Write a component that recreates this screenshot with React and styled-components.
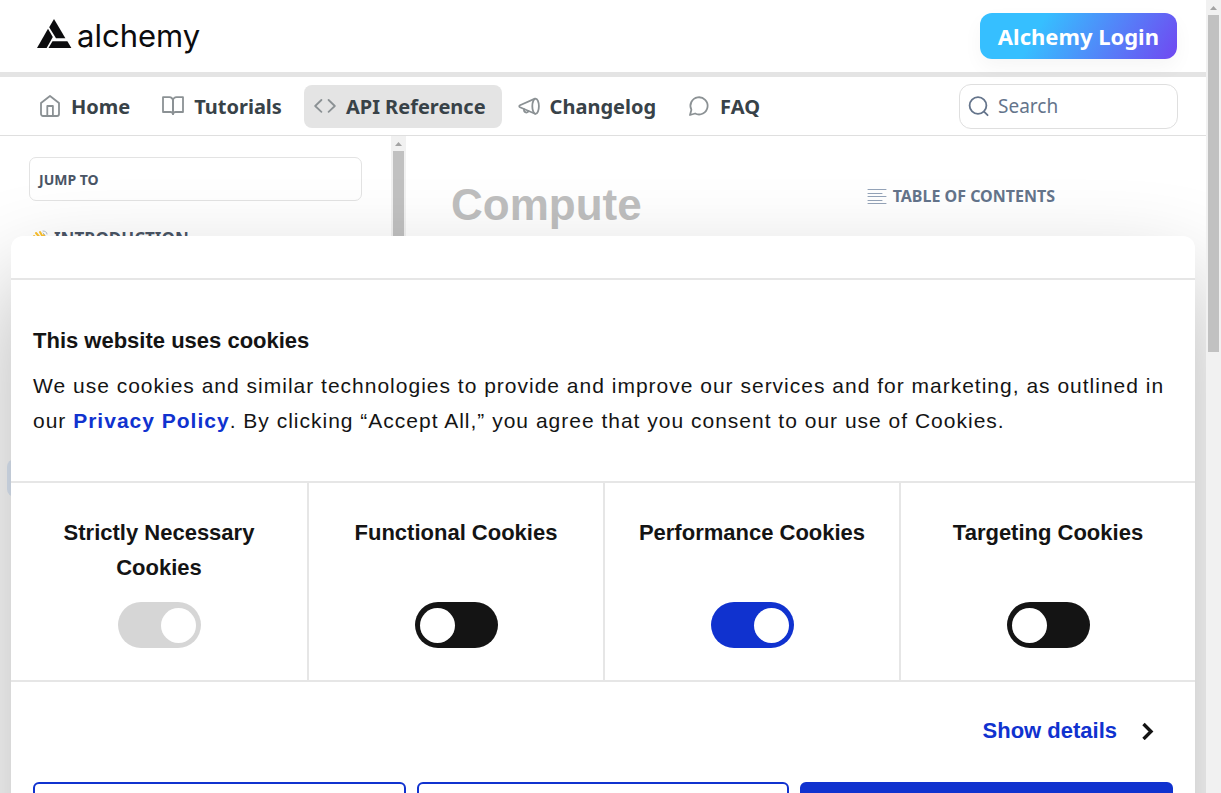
import React from "react";
import styled, { createGlobalStyle } from "styled-components";

const UI_FONT = '"Noto Sans", "Open Sans", sans-serif';
const TEXT_FONT = '"Liberation Sans", Arial, sans-serif';
const LINE = "#e3e3e3";
const BLUE = "#1032cf";
const INK = "#141414";

const GlobalStyle = createGlobalStyle`
  *, *::before, *::after { box-sizing: border-box; }
  html, body { margin: 0; overflow: hidden; background: #fff; }
  button, input { font: inherit; color: inherit; margin: 0; }
`;

const Shell = styled.div`
  display: flex;
  height: 100vh;
  font-family: ${UI_FONT};
`;

const Page = styled.div`
  position: relative;
  flex: 1;
  min-width: 0;
  overflow: hidden;
  display: flex;
  flex-direction: column;
`;

const ScrollTrack = styled.div`
  flex: none;
  width: 15px;
  padding: 0 2px;
  background: #f1f1f1;
  display: flex;
  flex-direction: column;
`;

const ScrollArrow = styled.svg`
  display: block;
  width: 11px;
  height: 15px;
  fill: #a3a3a3;
`;

const ScrollThumb = styled.div`
  height: ${(p) => p.$size};
  background: #c1c1c1;
`;

const TopBar = styled.header`
  display: flex;
  align-items: center;
  justify-content: space-between;
  height: 77px;
  padding: 0 29px 0 37px;
  border-bottom: 5px solid #e4e4e4;
`;

const Logo = styled.a`
  display: flex;
  align-items: center;
  gap: 5px;
  color: #0c0c0e;
  text-decoration: none;
  font: 400 31px/44px Inter, sans-serif;

  svg { display: block; }
`;

const LoginButton = styled.button`
  height: 46px;
  padding: 0 18px;
  border: 0;
  border-radius: 12px;
  background: linear-gradient(120deg, #36bfff 30%, #6e4df2 97%);
  box-shadow: 0 8px 20px rgba(0, 0, 0, 0.04);
  color: #fff;
  font-size: 22px;
  font-weight: 700;
`;

const NavBar = styled.nav`
  display: flex;
  align-items: center;
  justify-content: space-between;
  height: 59px;
  padding: 0 28px 0 29px;
  border-bottom: 1px solid #dfdfdf;
`;

const NavLinks = styled.div`
  display: flex;
  gap: 6px;
`;

const NavLink = styled.a`
  display: flex;
  align-items: center;
  gap: 10px;
  height: 43px;
  padding: 0 16px 0 10px;
  border-radius: 8px;
  background: ${(p) => (p.$active ? "#e4e4e4" : "transparent")};
  color: #384248;
  font-size: 20px;
  font-weight: 700;
  text-decoration: none;

  svg { color: #8b9194; }
`;

const StrokeIcon = styled.svg`
  flex: none;
  display: block;
  fill: none;
  stroke: currentColor;
  stroke-width: 1.8;
  stroke-linecap: round;
  stroke-linejoin: round;
`;

const SearchBox = styled.label`
  display: flex;
  align-items: center;
  gap: 8px;
  width: 219px;
  height: 45px;
  padding: 0 8px;
  border: 1px solid #dfdfdf;
  border-radius: 12px;
  color: #64748b;

  input {
    flex: 1;
    min-width: 0;
    padding: 0;
    border: 0;
    outline: 0;
    background: none;
    font-size: 19px;
  }
  input::placeholder { color: #64748b; opacity: 1; }
`;

const Columns = styled.div`
  flex: 1;
  min-height: 0;
  display: flex;
`;

const Sidebar = styled.aside`
  flex: none;
  width: 391px;
  padding: 21px 29px 0;
  color: #4a5565;
`;

const JumpTo = styled.button`
  display: block;
  width: 100%;
  height: 44px;
  padding: 0 9px;
  border: 1px solid ${LINE};
  border-radius: 7px;
  background: transparent;
  text-align: left;
  font-size: 14px;
  font-weight: 700;
`;

const SectionTitle = styled.h2`
  display: flex;
  align-items: center;
  gap: 4px;
  margin: 26px 0 0 3px;
  font-size: 17px;
  line-height: 24px;
  font-weight: 700;
`;

const CurrentRow = styled.div`
  height: 38px;
  margin: 208px -22px 0;
  border-radius: 8px;
  background: #e2edfb;
`;

const Article = styled.main`
  flex: 1;
  min-width: 0;
  display: flex;
  justify-content: space-between;
  align-items: flex-start;
  padding: 43px 151px 0 45px;
`;

const Title = styled.h1`
  margin: 0;
  color: #bfbfbf;
  font: 700 44px/52px ${TEXT_FONT};
`;

const Contents = styled.h2`
  display: flex;
  align-items: center;
  gap: 6px;
  margin: 5px 0 0;
  color: #64748b;
  font-size: 16px;
  line-height: 24px;
  font-weight: 700;

  svg { stroke: #94a3b8; stroke-width: 1; }
`;

const Dialog = styled.section`
  position: absolute;
  top: 236px;
  left: 11px;
  right: 11px;
  border-radius: 12px;
  background: #fff;
  box-shadow: 0 46px 98px rgba(0, 0, 0, 0.3);
  color: ${INK};
  font: 22px/35px ${TEXT_FONT};
`;

const DialogHead = styled.div`
  height: 44px;
  border-bottom: 2px solid #e6e6e6;
`;

const Notice = styled.div`
  height: 203px;
  padding: 43px 22px 0;
  border-bottom: 2px solid #e6e6e6;

  h2 {
    margin: 0 0 10px;
    font-size: 22px;
    font-weight: 700;
  }
  p {
    margin: 0;
    font-size: 21px;
    letter-spacing: 1px;
  }
  a {
    color: ${BLUE};
    font-weight: 700;
    text-decoration: none;
  }
`;

const Choices = styled.div`
  display: grid;
  grid-template-columns: repeat(4, 1fr);
  border-bottom: 2px solid #e6e6e6;
`;

const Choice = styled.label`
  display: flex;
  flex-direction: column;
  align-items: center;
  justify-content: space-between;
  height: 197px;
  padding: 32px 20px 32px;
  text-align: center;
  font-weight: 700;

  & + & { border-left: 2px solid #e6e6e6; }
`;

const Toggle = styled.input`
  appearance: none;
  display: flex;
  align-items: center;
  justify-content: flex-start;
  width: 83px;
  height: 46px;
  padding: 0 5px;
  border-radius: 23px;
  background: ${INK};

  &::before {
    content: "";
    width: 35px;
    height: 35px;
    border-radius: 50%;
    background: #fff;
  }
  &:checked { justify-content: flex-end; background: ${BLUE}; }
  &:disabled { background: #d6d6d6; }
`;

const DetailsRow = styled.div`
  display: flex;
  justify-content: flex-end;
  padding: 31px 40px 34px;
`;

const DetailsLink = styled.a`
  display: flex;
  align-items: center;
  gap: 24px;
  color: ${BLUE};
  font-weight: 700;
  text-decoration: none;

  svg {
    color: ${INK};
    stroke-width: 3.4;
    stroke-linecap: butt;
    stroke-linejoin: miter;
  }
`;

const Actions = styled.div`
  display: grid;
  grid-template-columns: repeat(3, 1fr);
  gap: 11px;
  padding: 0 22px 22px;
`;

const ActionButton = styled.button`
  height: 66px;
  border: 2px solid ${BLUE};
  border-radius: 6px;
  background: ${(p) => (p.$primary ? BLUE : "#fff")};
`;

const navItems = [
  {
    label: "Home",
    icon: (
      <>
        <path d="M2 9 11 2l9 7v11a2 2 0 0 1-2 2H4a2 2 0 0 1-2-2Z" />
        <path d="M8.3 22V12h5.6v10" />
      </>
    ),
  },
  {
    label: "Tutorials",
    icon: (
      <>
        <path d="M1 3.2h6.4A3.6 3.6 0 0 1 11 6.8v13.4a2.7 2.7 0 0 0-2.7-2.2H1Z" />
        <path d="M21 3.2h-6.4A3.6 3.6 0 0 0 11 6.8v13.4a2.7 2.7 0 0 1 2.7-2.2H21Z" />
      </>
    ),
  },
  {
    label: "API Reference",
    active: true,
    icon: <path d="M7.4 6 1.2 12l6.2 5.8M14.6 6l6.2 6-6.2 5.8" />,
  },
  {
    label: "Changelog",
    icon: (
      <>
        <ellipse cx="17.6" cy="12.2" rx="3.3" ry="7.6" />
        <path d="M17 4.6 2 11.2c-1 .5-1 1.5 0 2L17 19.8" />
        <path d="M6 15.2c-.3 3.6 3.7 4.4 4.3 1.8" />
      </>
    ),
  },
  {
    label: "FAQ",
    icon: <path d="M3.4 15.8A8.6 8.6 0 1 1 7.1 19.5L2 21Z" />,
  },
];

const choices = [
  { label: "Strictly Necessary Cookies", checked: true, disabled: true },
  { label: "Functional Cookies" },
  { label: "Performance Cookies", checked: true },
  { label: "Targeting Cookies" },
];

function Scrollbar({ size }) {
  return (
    <ScrollTrack aria-hidden="true">
      <ScrollArrow viewBox="0 0 11 15">
        <path d="M2 10 5.5 6 9 10Z" />
      </ScrollArrow>
      <ScrollThumb $size={size} />
    </ScrollTrack>
  );
}

function LogoMark() {
  return (
    <svg width="35" height="34" viewBox="0 0 35 34" fill="currentColor" aria-hidden="true">
      <path d="M17 0 28.4 19.2H19L12.2 8.2Z" />
      <path d="M11 9.8 15.8 18 9.6 29H0Z" />
      <path d="M15.5 22.2H30.4L34.4 29H11.5Z" />
    </svg>
  );
}

function WavingHand() {
  return (
    <svg width="18" height="18" viewBox="0 0 18 18" fill="none" strokeLinecap="round" aria-hidden="true">
      <path d="m2 6 5 6M4 3l6 7M8 2l4 7M12 5l2 6" stroke="#fbc02d" strokeWidth="2" />
      <path d="M5 9h9l1 4-4 4-4-2Z" fill="#fbc02d" />
      <path d="M11 1c2 0 4 1 4 3M11 3l2 2" stroke="#b0bec5" strokeWidth="1" />
    </svg>
  );
}

export default function App() {
  return (
    <>
      <GlobalStyle />
      <Shell>
        <Page>
          <TopBar>
            <Logo href="#">
              <LogoMark />
              alchemy
            </Logo>
            <LoginButton type="button">Alchemy Login</LoginButton>
          </TopBar>

          <NavBar>
            <NavLinks>
              {navItems.map((item) => (
                <NavLink key={item.label} href="#" $active={item.active}>
                  <StrokeIcon width="22" height="24" viewBox="0 0 22 24" aria-hidden="true">
                    {item.icon}
                  </StrokeIcon>
                  {item.label}
                </NavLink>
              ))}
            </NavLinks>
            <SearchBox>
              <StrokeIcon width="22" height="22" viewBox="0 0 22 22" aria-hidden="true">
                <circle cx="10" cy="10.5" r="8.4" />
                <path d="m16 16.6 3.6 3.6" />
              </StrokeIcon>
              <input type="search" placeholder="Search" aria-label="Search" />
            </SearchBox>
          </NavBar>

          <Columns>
            <Sidebar>
              <JumpTo type="button">JUMP TO</JumpTo>
              <SectionTitle>
                <WavingHand />
                INTRODUCTION
              </SectionTitle>
              <CurrentRow />
            </Sidebar>
            <Scrollbar size="300px" />
            <Article>
              <Title>Compute</Title>
              <Contents>
                <StrokeIcon width="20" height="20" viewBox="0 0 20 20" aria-hidden="true">
                  <path d="M1 3.5h18M1 7.5h14M1 10.5h18M1 14.5h14M1 17.5h18" />
                </StrokeIcon>
                TABLE OF CONTENTS
              </Contents>
            </Article>
          </Columns>

          <Dialog role="dialog" aria-labelledby="cookie-title">
            <DialogHead />
            <Notice>
              <h2 id="cookie-title">This website uses cookies</h2>
              <p>
                We use cookies and similar technologies to provide and improve our services and for
                marketing, as outlined in our <a href="#">Privacy Policy</a>. By clicking “Accept
                All,” you agree that you consent to our use of Cookies.
              </p>
            </Notice>
            <Choices>
              {choices.map((c) => (
                <Choice key={c.label}>
                  {c.label}
                  <Toggle type="checkbox" defaultChecked={c.checked} disabled={c.disabled} />
                </Choice>
              ))}
            </Choices>
            <DetailsRow>
              <DetailsLink href="#">
                Show details
                <StrokeIcon width="14" height="18" viewBox="0 0 14 18" aria-hidden="true">
                  <path d="m2.5 2 7.5 7.5-7.5 7.5" />
                </StrokeIcon>
              </DetailsLink>
            </DetailsRow>
            <Actions>
              <ActionButton type="button" />
              <ActionButton type="button" />
              <ActionButton type="button" $primary />
            </Actions>
          </Dialog>
        </Page>
        <Scrollbar size="337px" />
      </Shell>
    </>
  );
}
